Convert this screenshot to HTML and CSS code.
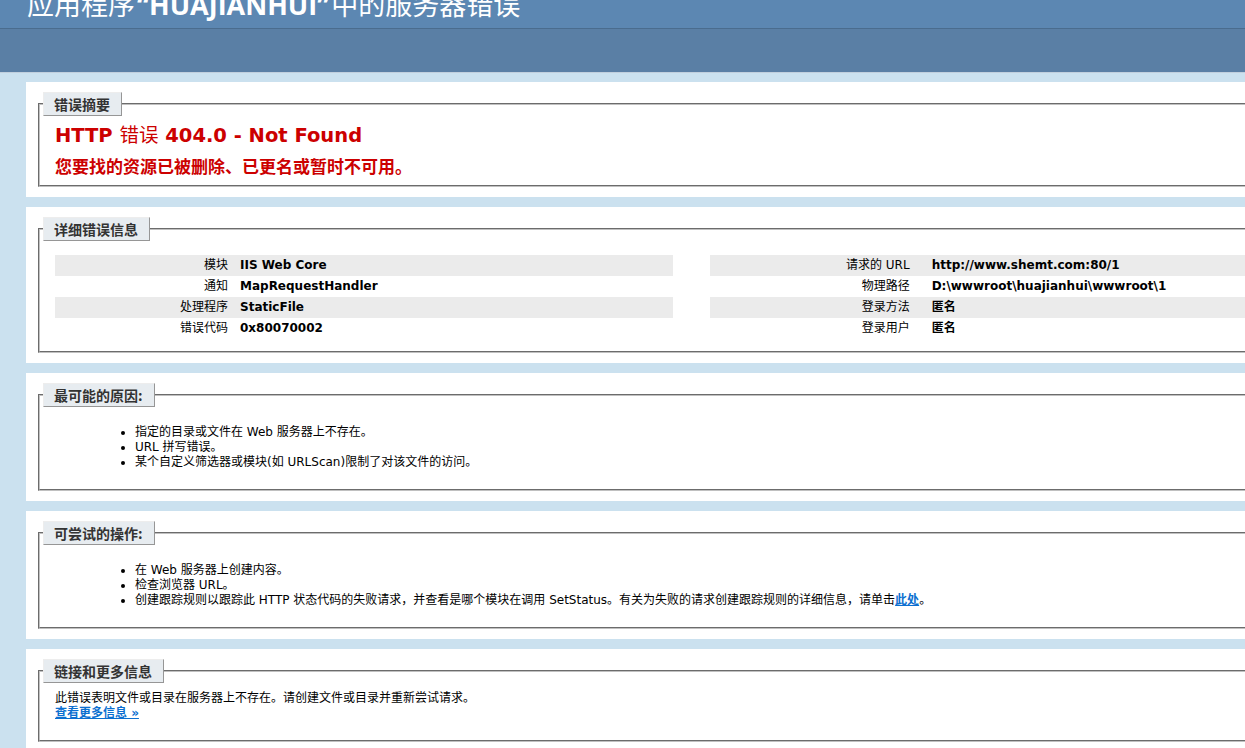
FILE: index.html
```html
<!DOCTYPE html>
<html lang="zh-CN">
<head>
<meta charset="utf-8">
<title>IIS 详细错误 - 404.0 - Not Found</title>
<link rel="stylesheet" href="styles.css">
</head>
<body>
<div class="header"><h1>应用程序<span class="h1-latin">“HUAJIANHUI”</span>中的服务器错误</h1></div>
<div class="server-version"></div>
<div class="content">
  <div class="container">
    <fieldset class="summary">
      <legend>错误摘要</legend>
      <h2>HTTP <span class="thin">错误</span> 404.0 - Not Found</h2>
      <h3>您要找的资源已被删除、已更名或暂时不可用。</h3>
    </fieldset>
  </div>

  <div class="container">
    <fieldset>
      <legend>详细错误信息</legend>
      <div class="details">
        <table class="details-left">
          <tr class="alt"><th>模块</th><td>IIS Web Core</td></tr>
          <tr><th>通知</th><td>MapRequestHandler</td></tr>
          <tr class="alt"><th>处理程序</th><td>StaticFile</td></tr>
          <tr><th>错误代码</th><td>0x80070002</td></tr>
        </table>
        <table class="details-right">
          <tr class="alt"><th>请求的 URL</th><td>http://www.shemt.com:80/1</td></tr>
          <tr><th>物理路径</th><td>D:\wwwroot\huajianhui\wwwroot\1</td></tr>
          <tr class="alt"><th>登录方法</th><td>匿名</td></tr>
          <tr><th>登录用户</th><td>匿名</td></tr>
        </table>
      </div>
    </fieldset>
  </div>

  <div class="container">
    <fieldset>
      <legend>最可能的原因:</legend>
      <ul>
        <li>指定的目录或文件在 Web 服务器上不存在。</li>
        <li>URL 拼写错误。</li>
        <li>某个自定义筛选器或模块(如 URLScan)限制了对该文件的访问。</li>
      </ul>
    </fieldset>
  </div>

  <div class="container">
    <fieldset>
      <legend>可尝试的操作:</legend>
      <ul>
        <li>在 Web 服务器上创建内容。</li>
        <li>检查浏览器 URL。</li>
        <li>创建跟踪规则以跟踪此 HTTP 状态代码的失败请求，并查看是哪个模块在调用 SetStatus。有关为失败的请求创建跟踪规则的详细信息，请单击<a href="#">此处</a>。</li>
      </ul>
    </fieldset>
  </div>

  <div class="container">
    <fieldset>
      <legend>链接和更多信息</legend>
      <p>此错误表明文件或目录在服务器上不存在。请创建文件或目录并重新尝试请求。<br><a href="#">查看更多信息 »</a></p>
    </fieldset>
  </div>
</div>
</body>
</html>
```

FILE: styles.css
```css
html, body {
  margin: 0;
  padding: 0;
  overflow: hidden;
}

body {
  width: 1900px;
  background: #CBE1EF;
  color: #000;
  font-family: "DejaVu Sans", "Noto Sans CJK SC", sans-serif;
  font-size: 12px;
  line-height: 15px;
}

.header {
  height: 28px;
  overflow: hidden;
  padding: 0 27px;
  background: #5C87B2;
}

.header h1 {
  margin: -10px 0 0;
  color: #fff;
  font-family: "Noto Sans CJK SC", sans-serif;
  font-size: 27px;
  line-height: 27px;
  font-weight: normal;
  white-space: nowrap;
}

.h1-latin {
  padding: 0 2px;
  font-family: "Open Sans", sans-serif;
  font-weight: 700;
}

.server-version {
  height: 43px;
  background: #5A7FA5;
  border-top: 1px solid #4A6C8E;
  border-bottom: 1px solid #C1CFDD;
}

.content {
  margin-left: 26px;
}

.container {
  width: 1804px;
  margin-top: 10px;
  padding: 10px;
  background: #fff;
}

.container:first-child {
  margin-top: 9px;
}

fieldset {
  min-width: 0;
  margin: 0 2px;
  padding: 0 15px 9px;
  border: 2px groove #c0c0c0;
}

fieldset.summary {
  padding-bottom: 8px;
}

legend {
  margin: 0 0 8px -12px;
  padding: 4px 11px 4px 10px;
  color: #333;
  background: #E7ECF0;
  border-top: 1px solid #EDEDED;
  border-left: 1px solid #EDEDED;
  border-right: 1px solid #969696;
  border-bottom: 1px solid #969696;
  font-family: "Noto Sans CJK SC", sans-serif;
  font-size: 14px;
  line-height: 14px;
  font-weight: bold;
}

h2 {
  margin: 0;
  color: #CC0000;
  font-size: 19.5px;
  line-height: 24px;
  font-weight: bold;
}

h2 .thin {
  font-weight: normal;
}

h3 {
  margin: 10px 0 0;
  color: #CC0000;
  font-size: 17px;
  line-height: 19px;
  font-weight: bold;
}

.details {
  display: flex;
  gap: 37px;
  align-items: flex-start;
}

table {
  margin: 6px 0 3px;
  border-collapse: collapse;
  table-layout: fixed;
}

.details-left {
  width: 618px;
}

.details-right {
  width: 1112px;
}

th, td {
  padding: 3px 0;
  vertical-align: top;
  text-align: left;
  white-space: nowrap;
}

th {
  text-align: right;
  font-weight: normal;
}

td {
  font-weight: bold;
}

.details-left th {
  width: 173px;
  padding-right: 12px;
}

.details-right th {
  width: 200px;
  padding-right: 22px;
}

tr.alt th,
tr.alt td {
  background: #EBEBEB;
}

ul {
  margin: 10px 0 10px 40px;
  padding-left: 40px;
}

p {
  margin: 0 0 10px;
}

a {
  color: #0B6FD0;
  font-weight: bold;
  text-decoration: underline;
}
```
